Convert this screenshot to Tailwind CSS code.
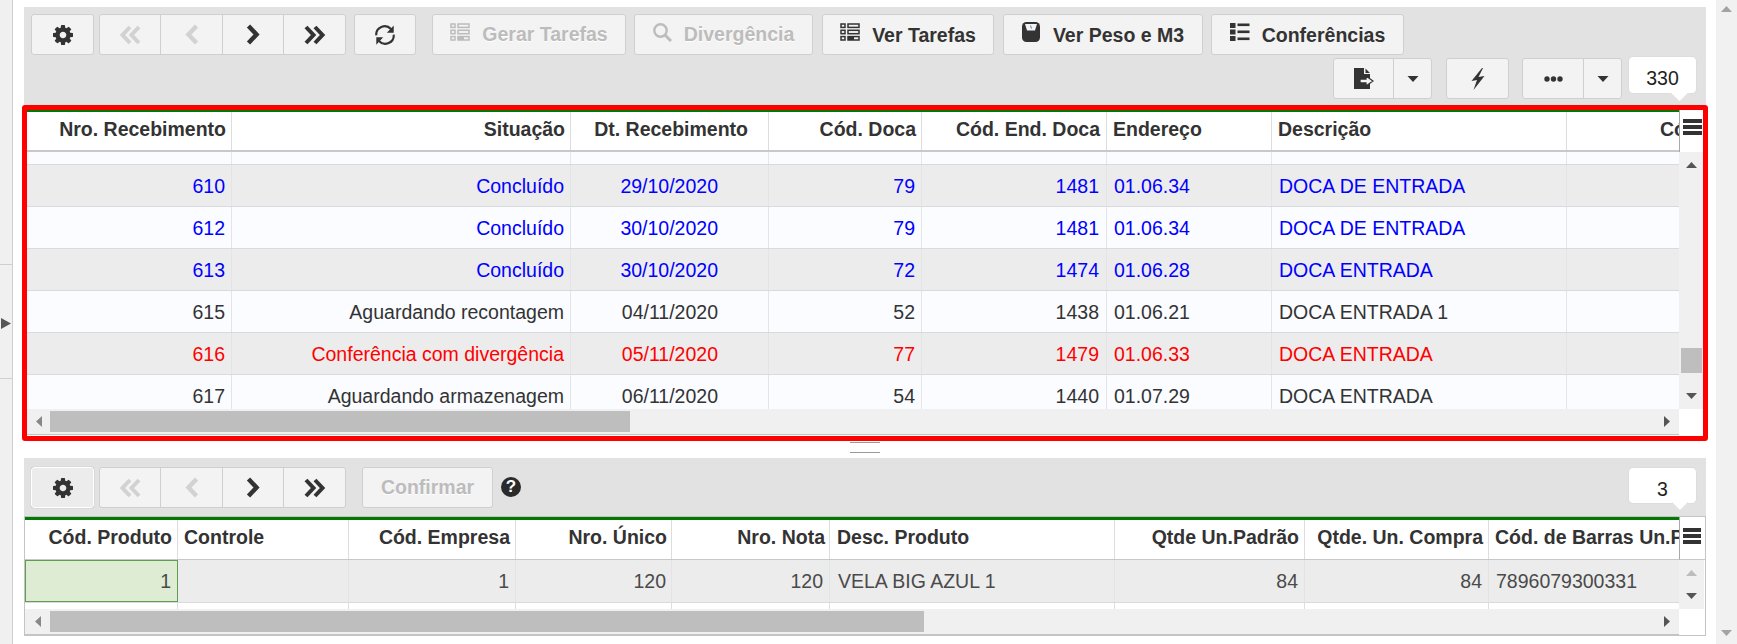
<!DOCTYPE html>
<html lang="pt">
<head>
<meta charset="utf-8">
<title>Recebimento</title>
<script src="https://cdn.jsdelivr.net/npm/@tailwindcss/browser@4"></script>
</head>
<body class="bg-white">
<svg class="hidden" xmlns="http://www.w3.org/2000/svg">
  <symbol id="gear" viewBox="128 128 1536 1536"><path fill="currentColor" fill-rule="evenodd" d="M1152 896q0-106-75-181t-181-75-181 75-75 181 75 181 181 75 181-75 75-181zm512-109v222q0 12-8 23t-20 13l-185 28q-19 54-39 91 35 50 107 138 10 12 10 25t-9 23q-27 37-99 108t-94 71q-12 0-26-9l-138-108q-44 23-91 38-16 136-29 186-7 28-36 28h-222q-14 0-24.500-8.500t-11.500-21.500l-28-184q-49-16-90-37l-141 107q-10 9-25 9-14 0-25-11-126-114-165-168-7-10-7-23 0-12 8-23 15-21 51-66.500t54-70.500q-27-50-41-99l-183-27q-13-2-21-12.500t-8-23.500v-222q0-12 8-23t19-13l186-28q14-46 39-92-40-57-107-138-10-12-10-24 0-10 9-23 26-36 98.500-107.500t94.500-71.500q13 0 26 10l138 107q44-23 91-38 16-136 29-186 7-28 36-28h222q14 0 24.500 8.500t11.500 21.500l28 184q49 16 90 37l142-107q9-9 24-9 13 0 25 10 129 119 165 170 7 8 7 22 0 12-8 23-15 21-51 66.500t-54 70.500q26 50 41 98l183 28q13 2 21 12.500t8 23.500z"/></symbol>
  <symbol id="dleft" viewBox="0 0 23 20"><path d="M11 2 L3.500 10 L11 18 M20 2 L12.500 10 L20 18" fill="none" stroke="currentColor" stroke-width="4"/></symbol>
  <symbol id="left" viewBox="0 0 14 21"><path d="M11.500 2 L3.500 10.500 L11.500 19" fill="none" stroke="currentColor" stroke-width="4.500"/></symbol>
  <symbol id="right" viewBox="0 0 14 21"><path d="M2.500 2 L10.500 10.500 L2.500 19" fill="none" stroke="currentColor" stroke-width="4.500"/></symbol>
  <symbol id="dright" viewBox="0 0 23 20"><path d="M3 2 L10.500 10 L3 18 M12 2 L19.500 10 L12 18" fill="none" stroke="currentColor" stroke-width="4"/></symbol>
  <symbol id="refresh" viewBox="0 0 24 24"><path d="M2.500 12.500 A9.200 9.200 0 0 1 18.500 5.500 M21.500 11.500 A9.200 9.200 0 0 1 5.500 18.500" fill="none" stroke="currentColor" stroke-width="2.300"/><path d="M21.500 1.500 V9.500 H14 Z M2.500 22.500 V14.500 H10 Z" fill="currentColor"/></symbol>
  <symbol id="tasks" viewBox="0 0 20 18"><g fill="none" stroke="currentColor" stroke-width="1.500"><rect x="1" y="1" width="4" height="3.400"/><rect x="8" y="1" width="11" height="3.400"/><rect x="1" y="7.300" width="4" height="3.400"/><rect x="8" y="7.300" width="11" height="3.400"/><rect x="1" y="13.600" width="4" height="3.400"/><rect x="8" y="13.600" width="11" height="3.400"/></g><rect x="8" y="13.600" width="6" height="3.400" fill="currentColor"/></symbol>
  <symbol id="search" viewBox="0 0 19 19"><circle cx="7.500" cy="7.500" r="6.200" fill="none" stroke="currentColor" stroke-width="2.400"/><path d="M12 12 L18 18" stroke="currentColor" stroke-width="3"/></symbol>
  <symbol id="scale" viewBox="0 0 18 20"><rect width="18" height="20" rx="4.500" fill="currentColor"/><path d="M3 2 H15 L13 8.500 H5 Z" fill="#f3f3f3"/><path d="M8.500 3.500 L9.500 6.500" stroke="#4a7fb5" stroke-width="1"/></symbol>
  <symbol id="list" viewBox="0 0 20 18"><g fill="currentColor"><rect x="0" y="0" width="5.500" height="5"/><rect x="0" y="6.500" width="5.500" height="5"/><rect x="0" y="13" width="5.500" height="5"/><rect x="7.500" y="0.500" width="12" height="2.600"/><rect x="7.500" y="7.500" width="12" height="2.600"/><rect x="7.500" y="14.500" width="12" height="2.600"/></g></symbol>
  <symbol id="export" viewBox="0 0 20 21"><path d="M0 0 H10 V6 H16 V21 H0 Z M11.500 0.500 L16 5 H11.500 Z" fill="currentColor"/><path d="M6 11 H12 V8 L19 13 L12 18 V15 H6 Z" fill="#f3f3f3" stroke="currentColor" stroke-width="1.300"/></symbol>
  <symbol id="bolt" viewBox="0 0 14 22"><path d="M11 0 L0.500 13 L6 12 L2.500 22 L13.500 8 L7.500 9 L12 0 Z" fill="currentColor"/></symbol>
  <symbol id="dots" viewBox="0 0 19 6"><circle cx="3" cy="3" r="2.700" fill="currentColor"/><circle cx="9.500" cy="3" r="2.700" fill="currentColor"/><circle cx="16" cy="3" r="2.700" fill="currentColor"/></symbol>
  <symbol id="down" viewBox="0 0 11 6"><path d="M0 0 H11 L5.500 6 Z" fill="currentColor"/></symbol>
  <symbol id="up" viewBox="0 0 11 6"><path d="M0 6 H11 L5.500 0 Z" fill="currentColor"/></symbol>
  <symbol id="tleft" viewBox="0 0 6 11"><path d="M6 0 V11 L0 5.500 Z" fill="currentColor"/></symbol>
  <symbol id="tright" viewBox="0 0 6 11"><path d="M0 0 V11 L6 5.500 Z" fill="currentColor"/></symbol>
</svg>

<div class="flex w-[1737px] h-[644px] overflow-hidden [font-family:'Liberation_Sans',Arial,sans-serif] text-[19.5px] text-[#333]">

  <!-- left strip -->
  <div class="flex flex-col w-[13px] shrink-0 bg-[#f0f0f0] border-r border-[#cfcfcf]">
    <div class="h-[265px] border-b border-[#cfcfcf]"></div>
    <div class="h-[114px] border-b border-[#cfcfcf] pt-[53px] pl-[1px]">
      <svg class="w-[10px] h-[11px] text-[#555]" viewBox="0 0 10 11"><path d="M0 0 L10 5.500 L0 11 Z" fill="currentColor"/></svg>
    </div>
  </div>

  <!-- main -->
  <div class="flex flex-col w-[1682px] ml-[11px] shrink-0 pt-[7px]">

    <!-- toolbar 1 -->
    <div class="h-[98px] bg-[#e2e2e2] pl-[7px] pt-[7px] shrink-0">
      <div class="flex h-[41px]">
        <div class="flex items-center justify-center w-[63px] h-[41px] rounded-[3px] border border-[#cfcfcf] bg-[#f3f3f3]"><svg class="w-[20px] h-[20px]"><use href="#gear"/></svg></div>
        <div class="flex ml-[5px] w-[247px] h-[41px] rounded-[3px] border border-[#cfcfcf] bg-[#f3f3f3]">
          <div class="flex items-center justify-center w-[61px] border-r border-[#cfcfcf] text-[#d2d2d2]"><svg class="w-[23px] h-[20px]"><use href="#dleft"/></svg></div>
          <div class="flex items-center justify-center w-[62px] border-r border-[#cfcfcf] text-[#d2d2d2]"><svg class="w-[14px] h-[21px]"><use href="#left"/></svg></div>
          <div class="flex items-center justify-center w-[61px] border-r border-[#cfcfcf]"><svg class="w-[14px] h-[21px]"><use href="#right"/></svg></div>
          <div class="flex items-center justify-center flex-1"><svg class="w-[23px] h-[20px]"><use href="#dright"/></svg></div>
        </div>
        <div class="flex items-center justify-center ml-[8px] w-[62px] h-[41px] rounded-[3px] border border-[#cfcfcf] bg-[#f3f3f3]"><svg class="w-[22px] h-[22px]"><use href="#refresh"/></svg></div>
        <div class="flex items-center justify-center gap-[12px] ml-[16px] w-[194px] h-[41px] rounded-[3px] border border-[#cfcfcf] bg-[#f3f3f3] font-bold text-[#bcbcbc] [text-shadow:0_1px_0_#fff]"><svg class="w-[20px] h-[18px] mb-[5px]"><use href="#tasks"/></svg><span class="mt-[1px]">Gerar Tarefas</span></div>
        <div class="flex items-center justify-center gap-[12px] ml-[8px] w-[179px] h-[41px] rounded-[3px] border border-[#cfcfcf] bg-[#f3f3f3] font-bold text-[#bcbcbc] [text-shadow:0_1px_0_#fff]"><svg class="w-[19px] h-[19px] mb-[5px]"><use href="#search"/></svg><span class="mt-[1px]">Divergência</span></div>
        <div class="flex items-center justify-center gap-[12px] ml-[9px] w-[172px] h-[41px] rounded-[3px] border border-[#cfcfcf] bg-[#f3f3f3] font-bold"><svg class="w-[20px] h-[18px] mb-[5px]"><use href="#tasks"/></svg><span class="mt-[3px]">Ver Tarefas</span></div>
        <div class="flex items-center justify-center gap-[13px] ml-[9px] w-[200px] h-[41px] rounded-[3px] border border-[#cfcfcf] bg-[#f3f3f3] font-bold"><svg class="w-[18px] h-[20px] mb-[5px]"><use href="#scale"/></svg><span class="mt-[3px]">Ver Peso e M3</span></div>
        <div class="flex items-center justify-center gap-[12px] ml-[8px] w-[193px] h-[41px] rounded-[3px] border border-[#cfcfcf] bg-[#f3f3f3] font-bold"><svg class="w-[20px] h-[18px] mb-[5px]"><use href="#list"/></svg><span class="mt-[3px]">Conferências</span></div>
      </div>
      <div class="flex justify-end items-start h-[41px] mt-[3px] pr-[9px]">
        <div class="flex w-[99px] h-[41px] rounded-[3px] border border-[#cfcfcf] bg-[#f3f3f3]">
          <div class="flex items-center justify-center w-[60px] border-r border-[#cfcfcf]"><svg class="w-[20px] h-[21px]"><use href="#export"/></svg></div>
          <div class="flex items-center justify-center flex-1"><svg class="w-[12px] h-[6px]"><use href="#down"/></svg></div>
        </div>
        <div class="flex items-center justify-center ml-[14px] w-[63px] h-[41px] rounded-[3px] border border-[#cfcfcf] bg-[#f3f3f3]"><svg class="w-[14px] h-[22px]"><use href="#bolt"/></svg></div>
        <div class="flex ml-[13px] w-[100px] h-[41px] rounded-[3px] border border-[#cfcfcf] bg-[#f3f3f3]">
          <div class="flex items-center justify-center w-[61px] border-r border-[#cfcfcf]"><svg class="w-[19px] h-[6px]"><use href="#dots"/></svg></div>
          <div class="flex items-center justify-center flex-1"><svg class="w-[12px] h-[6px]"><use href="#down"/></svg></div>
        </div>
        <div class="relative flex items-center justify-center ml-[6px] -mt-[2px] pt-[8px] w-[69px] h-[38px] rounded-[5px] bg-white border border-[#dcdcdc] text-[#222]">
          <span>330</span>
          <div class="absolute left-[44px] top-[30px] w-[13px] h-[13px] rotate-45 bg-white border-r border-b border-[#dcdcdc]"></div>
        </div>
      </div>
    </div>

    <!-- grid 1 -->
    <div class="relative -mx-[2px] h-[336px] shrink-0 border-[5px] border-[#ff0000] rounded-[3px] bg-white flex">
      <div class="w-[1652px] flex flex-col">
        <div class="grid grid-cols-[205px_339px_198px_153px_185px_165px_295px_112px] h-[42px] border-t-2 border-t-[#007a00] border-b-2 border-b-[#c6c8ca] font-bold bg-white [&>div]:pb-[2px]">
          <div class="flex items-center justify-end pr-[5px] border-r border-[#dddddd]">Nro. Recebimento</div>
          <div class="flex items-center justify-end pr-[5px] border-r border-[#dddddd]">Situação</div>
          <div class="flex items-center justify-end pr-[20px] border-r border-[#dddddd]">Dt. Recebimento</div>
          <div class="flex items-center justify-end pr-[5px] border-r border-[#dddddd]">Cód. Doca</div>
          <div class="flex items-center justify-end pr-[6px] border-r border-[#dddddd]">Cód. End. Doca</div>
          <div class="flex items-center pl-[6px] border-r border-[#dddddd]">Endereço</div>
          <div class="flex items-center pl-[6px] border-r border-[#dddddd]">Descrição</div>
          <div class="flex items-center pl-[93px] overflow-hidden whitespace-nowrap">Cód. Parc</div>
        </div>
        <div class="h-[257px] overflow-hidden flex flex-col">
          <div class="grid grid-cols-[205px_339px_198px_153px_185px_165px_295px_112px] h-[13px] shrink-0 bg-[#fafcff] border-b border-[#d8dade]">
            <div class="border-r border-[#e4e6e8]"></div><div class="border-r border-[#e4e6e8]"></div><div class="border-r border-[#e4e6e8]"></div><div class="border-r border-[#e4e6e8]"></div><div class="border-r border-[#e4e6e8]"></div><div class="border-r border-[#e4e6e8]"></div><div class="border-r border-[#e4e6e8]"></div><div></div>
          </div>
          <div class="grid grid-cols-[205px_339px_198px_153px_185px_165px_295px_112px] h-[42px] shrink-0 bg-[#ececec] border-b border-[#d8dade] text-[#0000ff] [&>div]:pt-[2px]">
            <div class="flex items-center justify-end pr-[6px] border-r border-[#e2e4e6]">610</div>
            <div class="flex items-center justify-end pr-[6px] border-r border-[#e2e4e6]">Concluído</div>
            <div class="flex items-center justify-end pr-[50px] border-r border-[#e2e4e6]">29/10/2020</div>
            <div class="flex items-center justify-end pr-[6px] border-r border-[#e2e4e6]">79</div>
            <div class="flex items-center justify-end pr-[7px] border-r border-[#e2e4e6]">1481</div>
            <div class="flex items-center pl-[7px] border-r border-[#e2e4e6]">01.06.34</div>
            <div class="flex items-center pl-[7px] border-r border-[#e2e4e6]">DOCA DE ENTRADA</div>
            <div></div>
          </div>
          <div class="grid grid-cols-[205px_339px_198px_153px_185px_165px_295px_112px] h-[42px] shrink-0 bg-[#fafcff] border-b border-[#d8dade] text-[#0000ff] [&>div]:pt-[2px]">
            <div class="flex items-center justify-end pr-[6px] border-r border-[#e2e4e6]">612</div>
            <div class="flex items-center justify-end pr-[6px] border-r border-[#e2e4e6]">Concluído</div>
            <div class="flex items-center justify-end pr-[50px] border-r border-[#e2e4e6]">30/10/2020</div>
            <div class="flex items-center justify-end pr-[6px] border-r border-[#e2e4e6]">79</div>
            <div class="flex items-center justify-end pr-[7px] border-r border-[#e2e4e6]">1481</div>
            <div class="flex items-center pl-[7px] border-r border-[#e2e4e6]">01.06.34</div>
            <div class="flex items-center pl-[7px] border-r border-[#e2e4e6]">DOCA DE ENTRADA</div>
            <div></div>
          </div>
          <div class="grid grid-cols-[205px_339px_198px_153px_185px_165px_295px_112px] h-[42px] shrink-0 bg-[#ececec] border-b border-[#d8dade] text-[#0000ff] [&>div]:pt-[2px]">
            <div class="flex items-center justify-end pr-[6px] border-r border-[#e2e4e6]">613</div>
            <div class="flex items-center justify-end pr-[6px] border-r border-[#e2e4e6]">Concluído</div>
            <div class="flex items-center justify-end pr-[50px] border-r border-[#e2e4e6]">30/10/2020</div>
            <div class="flex items-center justify-end pr-[6px] border-r border-[#e2e4e6]">72</div>
            <div class="flex items-center justify-end pr-[7px] border-r border-[#e2e4e6]">1474</div>
            <div class="flex items-center pl-[7px] border-r border-[#e2e4e6]">01.06.28</div>
            <div class="flex items-center pl-[7px] border-r border-[#e2e4e6]">DOCA ENTRADA</div>
            <div></div>
          </div>
          <div class="grid grid-cols-[205px_339px_198px_153px_185px_165px_295px_112px] h-[42px] shrink-0 bg-[#fafcff] border-b border-[#d8dade] text-[#333] [&>div]:pt-[2px]">
            <div class="flex items-center justify-end pr-[6px] border-r border-[#e2e4e6]">615</div>
            <div class="flex items-center justify-end pr-[6px] border-r border-[#e2e4e6]">Aguardando recontagem</div>
            <div class="flex items-center justify-end pr-[50px] border-r border-[#e2e4e6]">04/11/2020</div>
            <div class="flex items-center justify-end pr-[6px] border-r border-[#e2e4e6]">52</div>
            <div class="flex items-center justify-end pr-[7px] border-r border-[#e2e4e6]">1438</div>
            <div class="flex items-center pl-[7px] border-r border-[#e2e4e6]">01.06.21</div>
            <div class="flex items-center pl-[7px] border-r border-[#e2e4e6]">DOCA ENTRADA 1</div>
            <div></div>
          </div>
          <div class="grid grid-cols-[205px_339px_198px_153px_185px_165px_295px_112px] h-[42px] shrink-0 bg-[#ececec] border-b border-[#d8dade] text-[#ff0000] [&>div]:pt-[2px]">
            <div class="flex items-center justify-end pr-[6px] border-r border-[#e2e4e6]">616</div>
            <div class="flex items-center justify-end pr-[6px] border-r border-[#e2e4e6]">Conferência com divergência</div>
            <div class="flex items-center justify-end pr-[50px] border-r border-[#e2e4e6]">05/11/2020</div>
            <div class="flex items-center justify-end pr-[6px] border-r border-[#e2e4e6]">77</div>
            <div class="flex items-center justify-end pr-[7px] border-r border-[#e2e4e6]">1479</div>
            <div class="flex items-center pl-[7px] border-r border-[#e2e4e6]">01.06.33</div>
            <div class="flex items-center pl-[7px] border-r border-[#e2e4e6]">DOCA ENTRADA</div>
            <div></div>
          </div>
          <div class="grid grid-cols-[205px_339px_198px_153px_185px_165px_295px_112px] h-[42px] shrink-0 bg-[#fafcff] text-[#333] [&>div]:pt-[2px]">
            <div class="flex items-center justify-end pr-[6px] border-r border-[#e2e4e6]">617</div>
            <div class="flex items-center justify-end pr-[6px] border-r border-[#e2e4e6]">Aguardando armazenagem</div>
            <div class="flex items-center justify-end pr-[50px] border-r border-[#e2e4e6]">06/11/2020</div>
            <div class="flex items-center justify-end pr-[6px] border-r border-[#e2e4e6]">54</div>
            <div class="flex items-center justify-end pr-[7px] border-r border-[#e2e4e6]">1440</div>
            <div class="flex items-center pl-[7px] border-r border-[#e2e4e6]">01.07.29</div>
            <div class="flex items-center pl-[7px] border-r border-[#e2e4e6]">DOCA ENTRADA</div>
            <div></div>
          </div>
        </div>
        <div class="flex items-center h-[26px] bg-[#f0f0f0] border-b border-[#c4c4c4]">
          <div class="flex items-center justify-center w-[23px] text-[#888]"><svg class="w-[6px] h-[11px]"><use href="#tleft"/></svg></div>
          <div class="w-[580px] h-[21px] bg-[#bebebe]"></div>
          <div class="flex-1"></div>
          <div class="flex items-center justify-center w-[24px] text-[#555]"><svg class="w-[6px] h-[11px]"><use href="#tright"/></svg></div>
        </div>
      </div>
      <div class="w-[25px] flex flex-col">
        <div class="h-[42px] pt-[9px] pl-[3px] border-l border-[#a8a8a8] bg-white flex flex-col gap-[2px] items-start">
          <div class="w-[19px] h-[4px] bg-[#333]"></div>
          <div class="w-[19px] h-[4px] bg-[#333]"></div>
          <div class="w-[19px] h-[4px] bg-[#333]"></div>
        </div>
        <div class="h-[257px] bg-[#f0f0f0] flex flex-col items-center text-[#555]">
          <svg class="w-[11px] h-[6px] mt-[10px] shrink-0"><use href="#up"/></svg>
          <div class="w-[21px] h-[25px] mt-[180px] bg-[#bebebe] shrink-0"></div>
          <svg class="w-[11px] h-[6px] mt-[20px] shrink-0"><use href="#down"/></svg>
        </div>
        <div class="flex-1 bg-white"></div>
      </div>
    </div>

    <!-- splitter -->
    <div class="h-[17px] shrink-0 flex justify-center pt-[1px]">
      <div class="w-[30px] h-[11px] border-y border-[#999]"></div>
    </div>

    <!-- toolbar 2 -->
    <div class="flex items-start h-[58px] shrink-0 bg-[#e2e2e2] pl-[7px] pt-[9px]">
      <div class="flex items-center justify-center w-[63px] h-[41px] rounded-[3px] border border-white bg-[#ececec] shadow-[0_0_1px_#999]"><svg class="w-[20px] h-[20px]"><use href="#gear"/></svg></div>
      <div class="flex ml-[5px] w-[247px] h-[41px] rounded-[3px] border border-[#cfcfcf] bg-[#f3f3f3]">
        <div class="flex items-center justify-center w-[61px] border-r border-[#cfcfcf] text-[#d2d2d2]"><svg class="w-[23px] h-[20px]"><use href="#dleft"/></svg></div>
        <div class="flex items-center justify-center w-[62px] border-r border-[#cfcfcf] text-[#d2d2d2]"><svg class="w-[14px] h-[21px]"><use href="#left"/></svg></div>
        <div class="flex items-center justify-center w-[61px] border-r border-[#cfcfcf]"><svg class="w-[14px] h-[21px]"><use href="#right"/></svg></div>
        <div class="flex items-center justify-center flex-1"><svg class="w-[23px] h-[20px]"><use href="#dright"/></svg></div>
      </div>
      <div class="flex items-center justify-center ml-[16px] w-[131px] h-[41px] rounded-[3px] border border-[#cfcfcf] bg-[#f3f3f3] font-bold text-[#bcbcbc] [text-shadow:0_1px_0_#fff]">Confirmar</div>
      <div class="flex items-center justify-center ml-[8px] mt-[10px] w-[20px] h-[20px] rounded-full bg-[#2b2b2b] text-white font-bold text-[17px]">?</div>
      <div class="relative flex items-center justify-center ml-auto mr-[9px] pt-[8px] w-[69px] h-[37px] rounded-[5px] bg-white border border-[#dcdcdc] text-[#222]">
        <span>3</span>
        <div class="absolute left-[45px] top-[29px] w-[12px] h-[12px] rotate-45 bg-white border-r border-b border-[#dcdcdc]"></div>
      </div>
    </div>

    <!-- grid 2 -->
    <div class="flex h-[120px] shrink-0 border border-[#c4c4c4] bg-white">
      <div class="w-[1654px] flex flex-col">
        <div class="grid grid-cols-[153px_171px_167px_156px_158px_285px_190px_184px_190px] h-[43px] border-t-[3px] border-t-[#007a00] border-b border-b-[#c6c8ca] font-bold [&>div]:pb-[4px]">
          <div class="flex items-center justify-end pr-[5px] border-r border-[#dddddd]">Cód. Produto</div>
          <div class="flex items-center pl-[6px] border-r border-[#dddddd]">Controle</div>
          <div class="flex items-center justify-end pr-[5px] border-r border-[#dddddd]">Cód. Empresa</div>
          <div class="flex items-center justify-end pr-[4px] border-r border-[#dddddd]">Nro. Único</div>
          <div class="flex items-center justify-end pr-[4px] border-r border-[#dddddd]">Nro. Nota</div>
          <div class="flex items-center pl-[7px] border-r border-[#dddddd]">Desc. Produto</div>
          <div class="flex items-center justify-end pr-[5px] border-r border-[#dddddd]">Qtde Un.Padrão</div>
          <div class="flex items-center justify-end pr-[5px] border-r border-[#dddddd]">Qtde. Un. Compra</div>
          <div class="flex items-center pl-[6px] overflow-hidden whitespace-nowrap">Cód. de Barras Un.Padrão</div>
        </div>
        <div class="grid grid-cols-[153px_171px_167px_156px_158px_285px_190px_184px_190px] h-[43px] bg-[#ececec] border-b border-[#d8dade] text-[#4a4a4a] [&>div]:pt-[2px]">
          <div class="flex items-center justify-end pr-[6px] bg-[#deecd4] border border-[#5f9e50]">1</div>
          <div class="border-r border-[#e2e4e6]"></div>
          <div class="flex items-center justify-end pr-[6px] border-r border-[#e2e4e6]">1</div>
          <div class="flex items-center justify-end pr-[5px] border-r border-[#e2e4e6]">120</div>
          <div class="flex items-center justify-end pr-[6px] border-r border-[#e2e4e6]">120</div>
          <div class="flex items-center pl-[8px] border-r border-[#e2e4e6]">VELA BIG AZUL 1</div>
          <div class="flex items-center justify-end pr-[6px] border-r border-[#e2e4e6]">84</div>
          <div class="flex items-center justify-end pr-[6px] border-r border-[#e2e4e6]">84</div>
          <div class="flex items-center pl-[7px]">7896079300331</div>
        </div>
        <div class="grid grid-cols-[153px_171px_167px_156px_158px_285px_190px_184px_190px] h-[6px]">
          <div class="border-r border-[#dddddd]"></div><div class="border-r border-[#dddddd]"></div><div class="border-r border-[#dddddd]"></div><div class="border-r border-[#dddddd]"></div><div class="border-r border-[#dddddd]"></div><div class="border-r border-[#dddddd]"></div><div class="border-r border-[#dddddd]"></div><div class="border-r border-[#dddddd]"></div><div></div>
        </div>
        <div class="flex items-center h-[26px] bg-[#f0f0f0] border-b border-[#c4c4c4]">
          <div class="flex items-center justify-center w-[25px] text-[#888]"><svg class="w-[6px] h-[11px]"><use href="#tleft"/></svg></div>
          <div class="w-[874px] h-[21px] bg-[#bebebe]"></div>
          <div class="flex-1"></div>
          <div class="flex items-center justify-center w-[24px] text-[#555]"><svg class="w-[6px] h-[11px]"><use href="#tright"/></svg></div>
        </div>
      </div>
      <div class="flex-1 flex flex-col">
        <div class="h-[43px] pt-[11px] pl-[3px] border-l border-[#a8a8a8] border-b border-b-[#c6c8ca] flex flex-col gap-[2px] items-start">
          <div class="w-[18px] h-[4px] bg-[#333]"></div>
          <div class="w-[18px] h-[4px] bg-[#333]"></div>
          <div class="w-[18px] h-[4px] bg-[#333]"></div>
        </div>
        <div class="h-[49px] w-[25px] bg-[#f0f0f0] flex flex-col items-center">
          <svg class="w-[11px] h-[6px] mt-[10px] text-[#bcbcbc] shrink-0"><use href="#up"/></svg>
          <svg class="w-[11px] h-[6px] mt-[17px] text-[#555] shrink-0"><use href="#down"/></svg>
        </div>
      </div>
    </div>
  </div>

  <!-- page scrollbar -->
  <div class="flex flex-col justify-between items-center ml-[10px] w-[21px] shrink-0 bg-[#f1f1f1] pt-[6px] pb-[8px] text-[#a3a3a3]">
    <svg class="w-[11px] h-[6px]"><use href="#up"/></svg>
    <svg class="w-[11px] h-[6px]"><use href="#down"/></svg>
  </div>
</div>
</body>
</html>
